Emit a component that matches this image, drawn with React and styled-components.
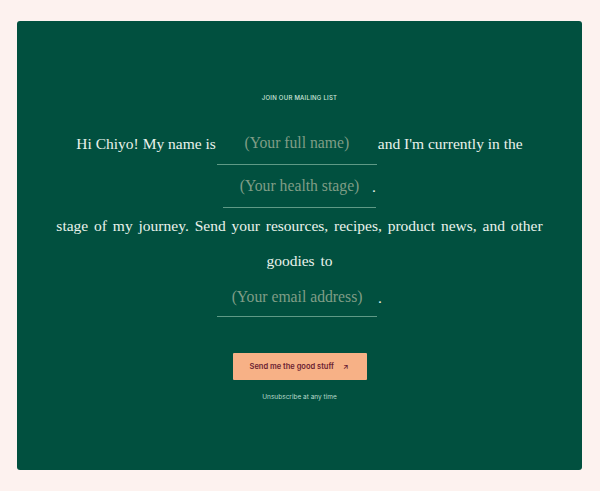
import * as React from "react";
import styled, { createGlobalStyle } from "styled-components";

const GlobalStyle = createGlobalStyle`
  html, body {
    margin: 0;
    padding: 0;
    background: #fdf2ef;
  }
`;

export default function App() {
  return (
    <>
      <GlobalStyle />
      <Page>
        <Card>
          <Eyebrow>JOIN OUR MAILING LIST</Eyebrow>
          <Sentence>
            <Words>Hi Chiyo! My name is</Words>
            <BlankInput placeholder="(Your full name)" />
            <Words>and I'm currently in the</Words>
            <BlankInput placeholder="(Your health stage)" $width={153} />
            <Stop $overlap>.</Stop>
            <Words $block>
              stage of my journey. Send your resources, recipes, product news,
              and other goodies to
            </Words>
            <BlankInput placeholder="(Your email address)" $height={39} />
            <Stop>.</Stop>
          </Sentence>
          <SubmitButton type="button">
            <span>Send me the good stuff</span>
            <Arrow>↗</Arrow>
          </SubmitButton>
          <Fineprint>Unsubscribe at any time</Fineprint>
        </Card>
      </Page>
    </>
  );
}

const Page = styled.div`
  padding: 21px 18px 21px 17px;
  height: 491px;
  box-sizing: border-box;
`;

const Card = styled.div`
  background: #01503f;
  border-radius: 3px;
  height: 100%;
  box-sizing: border-box;
  display: flex;
  flex-direction: column;
  align-items: center;
  padding-top: 73px;
`;

const Eyebrow = styled.div`
  font-family: "Inter", "Noto Sans", sans-serif;
  font-size: 6px;
  font-weight: 500;
  letter-spacing: 0.25px;
  line-height: 8px;
  color: #cfe6dc;
`;

const Sentence = styled.div`
  margin-top: 20px;
  width: 500px;
  display: flex;
  flex-wrap: wrap;
  justify-content: center;
  align-items: center;
  font-family: "Liberation Serif", serif;
  font-size: 15.5px;
  line-height: 35px;
  color: #eaf3ec;
`;

const Words = styled.span`
  padding: 0 1px;
  text-align: center;
  ${(p) => p.$block && "flex-basis: 100%; word-spacing: 2px;"}
`;

const BlankInput = styled.input`
  width: ${(p) => p.$width || 160}px;
  height: ${(p) => p.$height || 43}px;
  box-sizing: border-box;
  padding: 0 4px;
  background: transparent;
  border: none;
  border-bottom: 1px solid #5f9a86;
  font-family: "Liberation Serif", serif;
  font-size: 15.7px;
  text-align: center;
  color: #eaf3ec;
  outline: none;

  &::placeholder {
    color: #7f9d86;
  }
`;

const Stop = styled.span`
  ${(p) => p.$overlap && "margin-left: -5px;"}
  padding-left: 1px;
`;

const SubmitButton = styled.button`
  margin-top: 36px;
  width: 134px;
  height: 27px;
  border: none;
  border-radius: 1px;
  background: #f7b186;
  color: #6a2132;
  font-family: "Inter", "Noto Sans", sans-serif;
  font-size: 7.5px;
  font-weight: 600;
  display: flex;
  align-items: center;
  justify-content: space-between;
  padding: 0 18px 0 17px;
  cursor: pointer;
`;

const Arrow = styled.span`
  font-size: 7px;
  font-weight: 700;
`;

const Fineprint = styled.div`
  margin-top: 13px;
  font-family: "Inter", "Noto Sans", sans-serif;
  font-size: 6.5px;
  color: #b7dccb;
`;
